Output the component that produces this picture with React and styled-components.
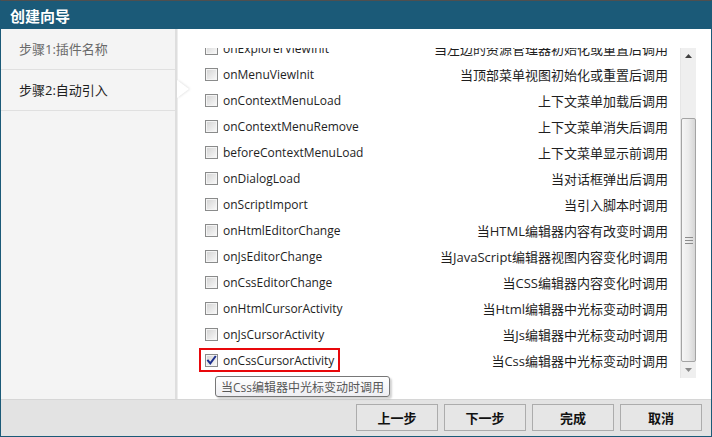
import React from "react";
import styled, { createGlobalStyle } from "styled-components";

const GlobalStyle = createGlobalStyle`
  html, body { margin: 0; padding: 0; background: #fff; }
  body { font-family: "Open Sans", "Noto Sans CJK SC", sans-serif; }
  * { box-sizing: border-box; }
`;

const CJK = `"Open Sans", "Noto Sans CJK SC", sans-serif`;

const Window = styled.div`
  width: 712px;
  height: 437px;
  display: flex;
  flex-direction: column;
  border: 1px solid #1b5a78;
  border-top-color: #4f4f4f;
  overflow: hidden;
`;

const TitleBar = styled.div`
  height: 28px;
  flex: none;
  background: #1b5a78;
  color: #fff;
  font: 700 15px ${CJK};
  display: flex;
  align-items: center;
  padding-left: 9px;
`;

const Body = styled.div`
  flex: 1;
  display: flex;
  min-height: 0;
`;

const Sidebar = styled.div`
  width: 176px;
  flex: none;
  background: #f4f4f4;
  border-right: 2px solid #dedede;
  position: relative;
  z-index: 2;
`;

const Step = styled.div`
  height: 41px;
  border-bottom: 1px solid #e0e0e0;
  display: flex;
  align-items: center;
  padding-left: 18px;
  padding-bottom: 1px;
  font: 400 13px ${CJK};
  color: ${(p) => (p.$active ? "#1e1e1e" : "#6a6a6a")};
  position: relative;
  ${(p) =>
    p.$active &&
    `
    &::after {
      content: "";
      position: absolute;
      right: -14px;
      top: 50%;
      margin-top: -10px;
      border-left: 12px solid #fff;
      border-top: 9px solid transparent;
      border-bottom: 9px solid transparent;
      filter: drop-shadow(1px 0 1px rgba(0,0,0,0.12));
    }
  `}
`;

const Content = styled.div`
  flex: 1;
  background: #fff;
  position: relative;
  padding: 19px 15px 21px 20px;
  box-shadow: inset 1px 0 0 #ededed;
  display: flex;
`;

const ScrollBox = styled.div`
  flex: 1;
  height: 330px;
  display: flex;
`;

const ListViewport = styled.div`
  flex: 1;
  overflow: hidden;
`;

const List = styled.div`
  margin-top: -13px;
  display: flex;
  flex-direction: column;
`;

const Row = styled.div`
  height: 26px;
  display: flex;
  align-items: center;
  justify-content: space-between;
  padding-left: 2px;
  padding-right: 12px;
`;

const Hook = styled.label`
  height: 24px;
  display: flex;
  align-items: center;
  gap: 5px;
  padding: 0 4px;
  border: 2px solid ${(p) => (p.$highlight ? "#e8080c" : "transparent")};
  font: 400 12px ${CJK};
  color: #1e1e1e;
`;

const Box = styled.span`
  width: 13px;
  height: 13px;
  flex: none;
  border: 1px solid #8a8b8b;
  background: linear-gradient(135deg, #d2d2d2 0%, #f2f2f2 80%, #ffffff 100%);
  box-shadow: inset 0 0 0 1px #f4f4f4;
  display: flex;
  align-items: center;
  justify-content: center;
`;

const Desc = styled.span`
  font: 400 13px ${CJK};
  color: #1e1e1e;
  white-space: nowrap;
`;

const Scrollbar = styled.div`
  width: 16px;
  flex: none;
  background: #efefef;
  border-left: 1px solid #e6e6e6;
  display: flex;
  flex-direction: column;
`;

const Arrow = styled.div`
  height: 16px;
  flex: none;
  display: flex;
  align-items: center;
  justify-content: center;
`;

const Gap = styled.div`
  flex: none;
  height: ${(p) => p.$h}px;
`;

const Thumb = styled.div`
  flex: none;
  height: ${(p) => p.$h}px;
  border: 1px solid #a4a4a4;
  border-radius: 2px;
  background: linear-gradient(90deg, #f6f6f6 0%, #ebebeb 50%, #d6d6d6 100%);
  display: flex;
  align-items: center;
  justify-content: center;
`;

const Tooltip = styled.div`
  position: absolute;
  left: 38px;
  top: 347px;
  height: 21px;
  padding: 0 5px;
  display: flex;
  align-items: center;
  border: 1px solid #777;
  border-radius: 3px;
  background: linear-gradient(#ffffff, #eeeef2);
  box-shadow: 2px 2px 2px rgba(0, 0, 0, 0.18);
  font: 400 12px ${CJK};
  color: #575757;
  white-space: nowrap;
  z-index: 3;
`;

const Footer = styled.div`
  height: 37px;
  flex: none;
  background: #e3e3e3;
  border-top: 1px solid #d6d6d6;
  display: flex;
  justify-content: flex-end;
  align-items: flex-start;
  gap: 6px;
  padding: 4px 9px 0 0;
`;

const Button = styled.button`
  width: 82px;
  height: 27px;
  border: 1px solid #acacac;
  background: #e6e6e6;
  font: 700 13px ${CJK};
  color: #111;
  padding: 0;
  cursor: pointer;
`;

const hooks = [
  ["onExplorerViewInit", "当左边的资源管理器初始化或重置后调用"],
  ["onMenuViewInit", "当顶部菜单视图初始化或重置后调用"],
  ["onContextMenuLoad", "上下文菜单加载后调用"],
  ["onContextMenuRemove", "上下文菜单消失后调用"],
  ["beforeContextMenuLoad", "上下文菜单显示前调用"],
  ["onDialogLoad", "当对话框弹出后调用"],
  ["onScriptImport", "当引入脚本时调用"],
  ["onHtmlEditorChange", "当HTML编辑器内容有改变时调用"],
  ["onJsEditorChange", "当JavaScript编辑器视图内容变化时调用"],
  ["onCssEditorChange", "当CSS编辑器内容变化时调用"],
  ["onHtmlCursorActivity", "当Html编辑器中光标变动时调用"],
  ["onJsCursorActivity", "当Js编辑器中光标变动时调用"],
  ["onCssCursorActivity", "当Css编辑器中光标变动时调用", true],
];

const Check = () => (
  <svg width="11" height="11" viewBox="0 0 11 11">
    <path d="M2 5.6 L4.3 8.4 L9.2 1.8" fill="none" stroke="#1c2f8c" strokeWidth="2" strokeLinecap="square" />
  </svg>
);

const Tri = ({ down }) => (
  <svg width="7" height="4" viewBox="0 0 7 4">
    <path d={down ? "M0 0 H7 L3.5 4 Z" : "M0 4 H7 L3.5 0 Z"} fill={down ? "#8a8a8a" : "#404040"} />
  </svg>
);

const Grip = () => (
  <svg width="8" height="7" viewBox="0 0 8 7">
    <path d="M0 0.5 H8 M0 3.5 H8 M0 6.5 H8" stroke="#8c8c8c" strokeWidth="1" />
  </svg>
);

export default function App() {
  return (
    <>
      <GlobalStyle />
      <Window>
        <TitleBar>创建向导</TitleBar>
        <Body>
          <Sidebar>
            <Step>步骤1:插件名称</Step>
            <Step $active>步骤2:自动引入</Step>
          </Sidebar>
          <Content>
            <ScrollBox>
              <ListViewport>
                <List>
                  {hooks.map(([name, desc, checked]) => (
                    <Row key={name}>
                      <Hook $highlight={checked}>
                        <Box>{checked && <Check />}</Box>
                        {name}
                      </Hook>
                      <Desc>{desc}</Desc>
                    </Row>
                  ))}
                </List>
              </ListViewport>
              <Scrollbar>
                <Arrow><Tri /></Arrow>
                <Gap $h={54} />
                <Thumb $h={244}><Grip /></Thumb>
                <Arrow><Tri down /></Arrow>
              </Scrollbar>
            </ScrollBox>
            <Tooltip>当Css编辑器中光标变动时调用</Tooltip>
          </Content>
        </Body>
        <Footer>
          <Button>上一步</Button>
          <Button>下一步</Button>
          <Button>完成</Button>
          <Button>取消</Button>
        </Footer>
      </Window>
    </>
  );
}
